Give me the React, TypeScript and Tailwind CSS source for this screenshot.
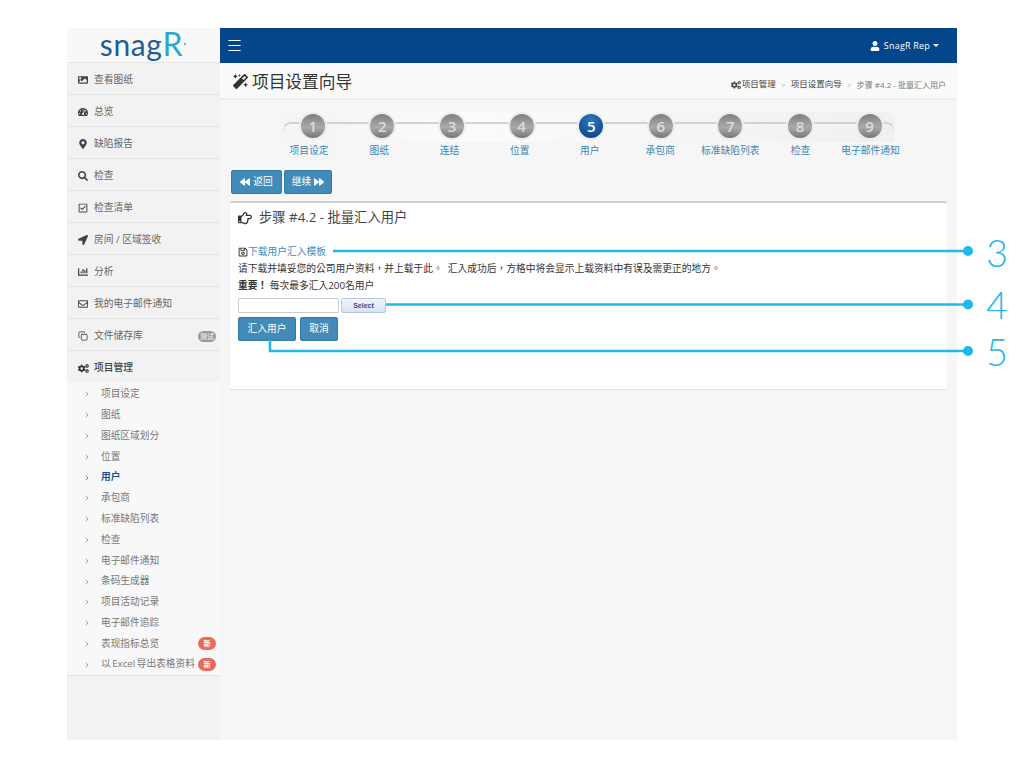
import { Copy, ChevronRight, Menu } from "lucide-react";
import {
  FaCogs,
  FaBackward,
  FaForward,
  FaRegHandPointRight,
  FaUser,
  FaRegSave,
  FaMagic,
  FaTachometerAlt,
  FaMapMarkerAlt,
  FaSearch,
  FaRegCheckSquare,
  FaLocationArrow,
  FaRegEnvelope,
  FaImage,
  FaChartBar,
} from "react-icons/fa";

const font = "[font-family:'Open_Sans','Noto_Sans_CJK_SC',sans-serif]";
const fontTc = "[font-family:'Open_Sans','Noto_Sans_CJK_TC',sans-serif]";

const mainItems = [
  { icon: FaImage, label: "查看图纸" },
  { icon: FaTachometerAlt, label: "总览" },
  { icon: FaMapMarkerAlt, label: "缺陷报告" },
  { icon: FaSearch, label: "检查" },
  { icon: FaRegCheckSquare, label: "检查清单" },
  { icon: FaLocationArrow, label: "房间 / 区域签收" },
  { icon: FaChartBar, label: "分析" },
  { icon: FaRegEnvelope, label: "我的电子邮件通知" },
  { icon: Copy, label: "文件储存库", badge: "测试" },
];

const subItems = [
  "项目设定",
  "图纸",
  "图纸区域划分",
  "位置",
  "用户",
  "承包商",
  "标准缺陷列表",
  "检查",
  "电子邮件通知",
  "条码生成器",
  "项目活动记录",
  "电子邮件追踪",
  "表现指标总览",
  "以 Excel 导出表格资料",
];

const steps = ["项目设定", "图纸", "连结", "位置", "用户", "承包商", "标准缺陷列表", "检查", "电子邮件通知"];

const Sidebar = () => (
  <aside className="w-[153px] shrink-0 bg-[#f2f2f2]">
    <div className="h-[35px] flex items-center justify-center bg-[#f8f8f8] border-b border-[#e6e6e6]">
      <span className="relative -ml-[4px] text-[30px] leading-none tracking-[0.6px] text-[#1f5f93] [font-family:'Lato',sans-serif] mb-[3px]">
        snag<span className="text-[32px] text-[#29a9cf]">R</span>
        <span className="absolute -right-[3px] top-[15px] h-[2px] w-[2px] rounded-full bg-[#29a9cf]" />
      </span>
    </div>
    {mainItems.map((item) => (
      <div key={item.label} className="h-8 flex items-center pl-[11px] pr-[4px] pt-[3px] border-b border-[#e4e4e4] text-[9.75px] text-[#666]">
        <span className="w-[16px] flex items-center">
          <item.icon size={10} className="text-[#444]" />
        </span>
        <span>{item.label}</span>
        {item.badge && (
          <span className="ml-auto h-[11px] w-[18px] rounded-full bg-[#9a9a9a] text-white text-[7px] leading-[11px] text-center">{item.badge}</span>
        )}
      </div>
    ))}
    <div className="h-8 flex items-center pl-[11px] pt-[2px] text-[9.75px] font-medium text-[#444]">
      <span className="w-[16px] flex items-center">
        <FaCogs size={11} className="text-[#333]" />
      </span>
      项目管理
    </div>
    <div className="bg-[#f8f8f8] pt-[2px] border-b border-[#e0e0e0] -mt-[1px]">
      {subItems.map((label, i) => (
        <div key={label + i} className={`h-[20.8px] flex items-center pl-[16px] pr-[4px] text-[9.7px] ${label === "用户" ? "text-[#1d4f8c] font-bold" : "text-[#777]"}`}>
          <ChevronRight size={8} className="mr-[10px] shrink-0" />
          <span className="whitespace-nowrap [word-spacing:-1px]">{label}</span>
          {i >= 12 && (
            <span className="ml-auto h-[13px] w-[18px] shrink-0 rounded-full bg-[#ec6a5c] text-white text-[7px] font-bold leading-[13px] text-center">新</span>
          )}
        </div>
      ))}
    </div>
  </aside>
);

const Stepper = () => (
  <div className="relative ml-[48px] mt-[12px] h-[45px] w-[626px]">
    <div className="absolute left-[5px] top-0 h-[30px] w-[611px] rounded-t-[8px] bg-[linear-gradient(90deg,#f4f4f4,#fbfbfb_30%,#f0f0f0)]" />
    <div className="absolute left-[5px] top-[10px] h-[10px] w-[611px] rounded-t-[8px] border-x border-t-2 border-[#d2d2d2] border-x-[#e0e0e0]" />
    <div className="relative flex">
      {steps.map((label, i) => (
        <div key={label} className="w-[69.6px] flex justify-center shrink-0">
          <div
            className={`h-[28px] w-[28px] rounded-full border-2 border-[#ececec] flex items-center justify-center text-[15px] font-semibold ${
              i === 4
                ? "bg-[radial-gradient(circle_at_50%_25%,#2c78b8,#063f86)] text-white"
                : "bg-[linear-gradient(#7f7f7f,#aaaaaa_55%,#767676)] text-[#dcdcdc]"
            }`}
          >
            {i + 1}
          </div>
        </div>
      ))}
    </div>
    <div className="relative flex -ml-[4px] mt-[3px]">
      {steps.map((label) => (
        <span key={label} className="w-[70.2px] shrink-0 text-center text-[9.75px] leading-[15px] text-[#3d87b3] whitespace-nowrap">
          {label}
        </span>
      ))}
    </div>
  </div>
);

const Btn = ({ className, children }: { className: string; children: React.ReactNode }) => (
  <button className={`h-[24px] flex items-center justify-center gap-[3px] rounded-[2px] bg-[#428bb9] border border-[#357ca5] text-white text-[9.75px] ${className}`}>
    {children}
  </button>
);

const Annotations = () => (
  <svg className="absolute left-0 top-0 pointer-events-none" width="1024" height="768" fill="none" stroke="#1fb9ea" strokeWidth="2.5">
    <path d="M333 251H968" />
    <circle cx="968" cy="251" r="5" fill="#1fb9ea" stroke="none" />
    <path d="M386 304.5H968" />
    <circle cx="968" cy="304.5" r="5" fill="#1fb9ea" stroke="none" />
    <path d="M270 340V351H968" />
    <circle cx="968" cy="351" r="5" fill="#1fb9ea" stroke="none" />
  </svg>
);

const Callout = ({ n, top }: { n: number; top: string }) => (
  <span className={`absolute left-[986px] ${top} text-[38px] leading-none text-[#1fb9ea] [font-family:'Lato',sans-serif] font-light`}>{n}</span>
);

export default function App() {
  return (
    <div className={`relative h-[768px] w-[1024px] overflow-hidden bg-white pt-[28px] pl-[67px] ${font}`}>
      <div className="flex h-[712px] w-[890px]">
        <Sidebar />
        <main className="flex-1 min-w-0 bg-[#f6f6f6] flex flex-col">
          <header className="h-[35px] bg-[#03468c] flex items-center justify-between pl-[6px] pr-[18px] text-white shrink-0">
            <Menu size={17} strokeWidth={1.6} />
            <div className="flex items-center text-[9px] tracking-[0.2px]">
              <FaUser size={10} className="mr-[4px]" />
              <span className="mr-[3px]">SnagR Rep</span>
              <span className="border-x-[3px] border-t-[3px] border-x-transparent border-t-white" />
            </div>
          </header>
          <div className="h-[37px] shrink-0 flex items-center justify-between pl-[13px] pr-[11px] bg-[#fafafa] border-b-2 border-[#eeeeee]">
            <h1 className="flex items-center gap-[4px] text-[16.7px] font-normal text-[#333] mt-[3px]">
              <FaMagic size={15} />
              项目设置向导
            </h1>
            <div className="flex items-center text-[8px] text-[#444] mt-[8px]">
              <FaCogs size={10} className="mr-[1px]" />
              <span className="text-[8.5px]">项目管理</span>
              <span className="w-[15px] text-center text-[#bbb]">&gt;</span>
              <span className="text-[8.5px]">项目设置向导</span>
              <span className="w-[15px] text-center text-[#bbb]">&gt;</span>
              <span className="text-[#777]">步骤 #4.2 - 批量汇入用户</span>
            </div>
          </div>
          <div className="flex-1 px-[10px]">
            <Stepper />
            <div className="mt-[13px] ml-[1px] flex gap-[2px]">
              <Btn className="w-[51px]">
                <FaBackward size={10} /> 返回
              </Btn>
              <Btn className="w-[48px]">
                继续 <FaForward size={10} />
              </Btn>
            </div>
            <section className="mt-[7px] h-[188px] w-[717px] rounded-[2px] bg-white border-t-2 border-[#cfcfcf] shadow-[0_1px_1px_rgba(0,0,0,0.1)] pl-[8px] pt-[5px]">
              <h2 className="flex items-center gap-[7px] h-[20px] text-[13.3px] font-normal text-[#444]">
                <FaRegHandPointRight size={14} className="text-[#333]" />
                步骤 #4.2 - 批量汇入用户
              </h2>
              <div className="mt-[17px] flex items-center h-[14px] text-[9.75px] text-[#3c8dbc]">
                <FaRegSave size={10} className="text-[#333]" />
                下载用户汇入模板
              </div>
              <p className={`mt-[3px] h-[14px] leading-[14px] text-[9.75px] text-[#333] whitespace-pre ${fontTc}`}>请下载并填妥您的公司用户资料，并上载于此。  汇入成功后，方格中将会显示上载资料中有误及需更正的地方。</p>
              <p className={`mt-[3px] h-[14px] leading-[14px] text-[9.75px] text-[#333] ${fontTc}`}>
                <strong>重要！</strong> 每次最多汇入200名用户
              </p>
              <div className="mt-[5px] flex items-center gap-[2px]">
                <div className="h-[15px] w-[101px] bg-white border border-[#c9cdd6] rounded-[1px]" />
                <div className="h-[15px] w-[45px] rounded-[2px] border border-[#b4c6e0] bg-[linear-gradient(#f2f6fc,#d7e2f2)] text-[7px] font-bold text-[#3a4a90] text-center leading-[13px] [font-family:'Liberation_Sans',sans-serif]">
                  Select
                </div>
              </div>
              <div className="mt-[4px] flex gap-[4px]">
                <Btn className="w-[58px]">汇入用户</Btn>
                <Btn className="w-[38px]">取消</Btn>
              </div>
            </section>
          </div>
        </main>
      </div>
      <Annotations />
      <Callout n={3} top="top-[233px]" />
      <Callout n={4} top="top-[285px]" />
      <Callout n={5} top="top-[332px]" />
    </div>
  );
}
